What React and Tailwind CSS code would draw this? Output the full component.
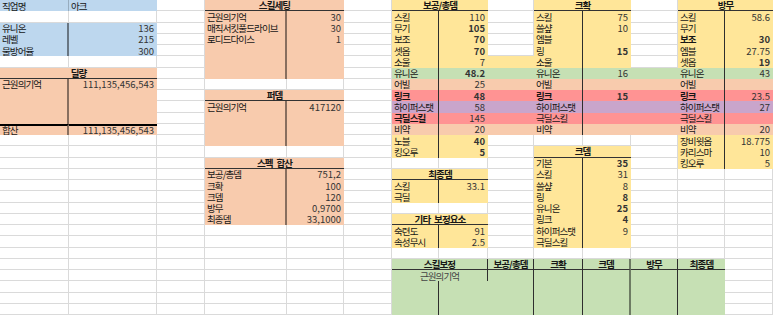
import clsx from 'clsx'

const ROWS = 28
const COLS = 14

const FILL = {
  blue: 'bg-[#BDD7EE]',
  orange: 'bg-[#F8CBAD]',
  yellow: 'bg-[#FFE699]',
  green: 'bg-[#C6E0B4]',
  red: 'bg-[#FF9393]',
  purple: 'bg-[#C9A5CB]',
}

// sheet model: key "r,c" -> cell props
const cells = new Map()
const set = (r, c, props) => {
  const key = `${r},${c}`
  cells.set(key, { ...(cells.get(key) || {}), ...props })
}
const fill = (r1, r2, c1, c2, color) => {
  for (let r = r1; r <= r2; r++) for (let c = c1; c <= c2; c++) set(r, c, { fill: color })
}
const header = (r, c, text, span = 2) => set(r, c, { text, span, align: 'center', bold: true, head: true })
const row = (r, c, label, value, opts = {}) => {
  set(r, c, { text: label, line: opts.line || 'thin', bold: opts.boldLabel })
  set(r, c + 1, { text: value, align: 'right', bold: opts.bold, value: true })
}
const lines = (r1, r2, c, line) => {
  for (let r = r1; r <= r2; r++) set(r, c, { line })
}

// left: character info
fill(0, 0, 0, 1, 'blue')
fill(2, 4, 0, 1, 'blue')
row(0, 0, '직업명', '', { line: 'faint' })
set(0, 1, { text: '아크', align: 'left', value: false })
row(2, 0, '유니온', '136', { line: 'thick' })
row(3, 0, '레벨', '215', { line: 'thick' })
row(4, 0, '물방어율', '300', { line: 'thick' })

// left: 딜량
fill(6, 11, 0, 1, 'orange')
header(6, 0, '딜량')
row(7, 0, '근원의기억', '111,135,456,543', { line: 'thick' })
lines(8, 10, 0, 'thick')
row(11, 0, '합산', '111,135,456,543', { line: 'thick' })
set(11, 0, { top: true })
set(11, 1, { top: true })

// middle: 스킬세팅 / 퍼뎀 / 스펙 합산
fill(0, 6, 3, 4, 'orange')
header(0, 3, '스킬세팅')
row(1, 3, '근원의기억', '30')
row(2, 3, '매직서킷풀드라이브', '30')
row(3, 3, '로디드다이스', '1')
lines(1, 6, 3, 'thick')

fill(8, 12, 3, 4, 'orange')
header(8, 3, '퍼뎀')
row(9, 3, '근원의기억', '417120', { line: 'thick' })
lines(10, 12, 3, 'thick')

fill(14, 19, 3, 4, 'orange')
header(14, 3, '스펙\u2002합산')
row(15, 3, '보공/총뎀', '751,2', { line: 'thick' })
row(16, 3, '크확', '100', { line: 'thick' })
row(17, 3, '크뎀', '120', { line: 'thick' })
row(18, 3, '방무', '0,9700', { line: 'thick' })
row(19, 3, '최종뎀', '33,1000', { line: 'thick' })

// right: yellow tables
fill(0, 5, 6, 7, 'yellow')
fill(12, 13, 6, 7, 'yellow')
fill(5, 5, 8, 8, 'yellow')
fill(0, 5, 9, 10, 'yellow')
fill(0, 5, 12, 13, 'yellow')
fill(12, 14, 12, 13, 'yellow')
const bands = ['green', 'orange', 'red', 'purple', 'red', 'orange']
bands.forEach((color, i) => fill(6 + i, 6 + i, 6, 13, color))

header(0, 6, '보공/총뎀')
row(1, 6, '스킬', '110')
row(2, 6, '무기', '105', { bold: true })
row(3, 6, '보조', '70', { bold: true })
row(4, 6, '셋옵', '70', { bold: true })
row(5, 6, '소울', '7')
row(6, 6, '유니온', '48.2', { bold: true })
row(7, 6, '어빌', '25')
row(8, 6, '링크', '48', { bold: true, boldLabel: true })
row(9, 6, '하이퍼스탯', '58')
row(10, 6, '극딜스킬', '145', { boldLabel: true })
row(11, 6, '비약', '20')
row(12, 6, '노블', '40', { bold: true })
row(13, 6, '킹오루', '5', { bold: true })

header(0, 9, '크확')
row(1, 9, '스킬', '75')
row(2, 9, '쓸샾', '10')
row(3, 9, '엠블', '')
row(4, 9, '링', '15', { bold: true })
row(5, 9, '소울', '')
row(6, 9, '유니온', '16')
row(7, 9, '어빌', '')
row(8, 9, '링크', '15', { bold: true, boldLabel: true })
row(9, 9, '하이퍼스탯', '')
row(10, 9, '극딜스킬', '')
row(11, 9, '비약', '')

fill(13, 21, 9, 10, 'yellow')
header(13, 9, '크뎀')
row(14, 9, '기본', '35', { bold: true })
row(15, 9, '스킬', '31')
row(16, 9, '쓸샾', '8')
row(17, 9, '링', '8', { bold: true })
row(18, 9, '유니온', '25', { bold: true })
row(19, 9, '링크', '4', { bold: true })
row(20, 9, '하이퍼스탯', '9')
row(21, 9, '극딜스킬', '')

header(0, 12, '방무')
row(1, 12, '스킬', '58.6')
row(2, 12, '무기', '')
row(3, 12, '보조', '30', { bold: true, boldLabel: true })
row(4, 12, '엠블', '27.75')
row(5, 12, '셋옵', '19', { bold: true })
row(6, 12, '유니온', '43')
row(7, 12, '어빌', '')
row(8, 12, '링크', '23.5', { boldLabel: true })
row(9, 12, '하이퍼스탯', '27')
row(10, 12, '극딜스킬', '')
row(11, 12, '비약', '20')
row(12, 12, '장비윗옵', '18.775')
row(13, 12, '카리스마', '10')
row(14, 12, '킹오루', '5')

fill(15, 17, 6, 7, 'yellow')
header(15, 6, '최종뎀')
row(16, 6, '스킬', '33.1')
row(17, 6, '극딜', '')

fill(19, 21, 6, 7, 'yellow')
header(19, 6, '기타\u2002보정요소')
row(20, 6, '숙련도', '91')
row(21, 6, '속성무시', '2.5')

// bottom: 스킬보정
fill(23, 27, 6, 12, 'green')
header(23, 6, '스킬보정')
;['보공/총뎀', '크확', '크뎀', '방무', '최종뎀'].forEach((t, i) => header(23, 8 + i, t, 1))
set(24, 6, { text: '근원의기억', span: 2, align: 'center', muted: true })
for (let r = 23; r <= 27; r++) {
  set(r, 6, { line: 'thin' })
  set(r, 8, { line: 'thin' })
  set(r, 9, { line: 'thin' })
  set(r, 10, { line: 'thick' })
  set(r, 11, { line: 'thin' })
}

const hasKorean = (s) => /[가-힣]/.test(s || '')

const Cell = ({ cell }) => {
  const align = cell.align || 'left'
  const kr = hasKorean(cell.text)
  return (
    <div
      className={clsx(
        'flex items-center whitespace-nowrap min-w-0 leading-[10px] text-[9.5px]',
        cell.fill ? FILL[cell.fill] : 'border-r border-b border-[#DADADA]',
        cell.span === 2 && 'col-span-2',
        align === 'right' && 'justify-end pr-[3px]',
        align === 'center' && 'justify-center',
        align === 'left' && 'pl-[2px]',
        cell.bold && 'font-bold',
        cell.value ? 'text-[#333333]' : 'text-[#161616]',
        cell.muted && 'text-[#444444]',
        kr && 'tracking-[-0.9px]',
        cell.line === 'thin' && 'border-r border-r-[#2e2e2e]',
        cell.line === 'thick' && 'border-r-2 border-r-black/45',
        cell.line === 'faint' && 'border-r border-r-black/20',
        cell.head && 'border-b border-b-[#333333]',
        cell.top && 'border-t-2 border-t-black'
      )}
    >
      {cell.text}
    </div>
  )
}

const Sheet = () => {
  const items = []
  for (let r = 0; r < ROWS; r++) {
    let c = 0
    while (c < COLS) {
      const cell = cells.get(`${r},${c}`) || {}
      items.push(<Cell key={`${r}-${c}`} cell={cell} />)
      c += cell.span || 1
    }
  }
  return (
    <div className="grid w-[773px] h-[316px] overflow-hidden bg-white grid-cols-[69px_88px_48px_82px_57px_48px_47px_49px_46px_49px_48px_47px_47px_48px] grid-rows-[repeat(28,11.25px)] font-['Noto_Sans_CJK_KR','Noto_Sans',sans-serif]">
      {items}
    </div>
  )
}

export default function App() {
  return <Sheet />
}
